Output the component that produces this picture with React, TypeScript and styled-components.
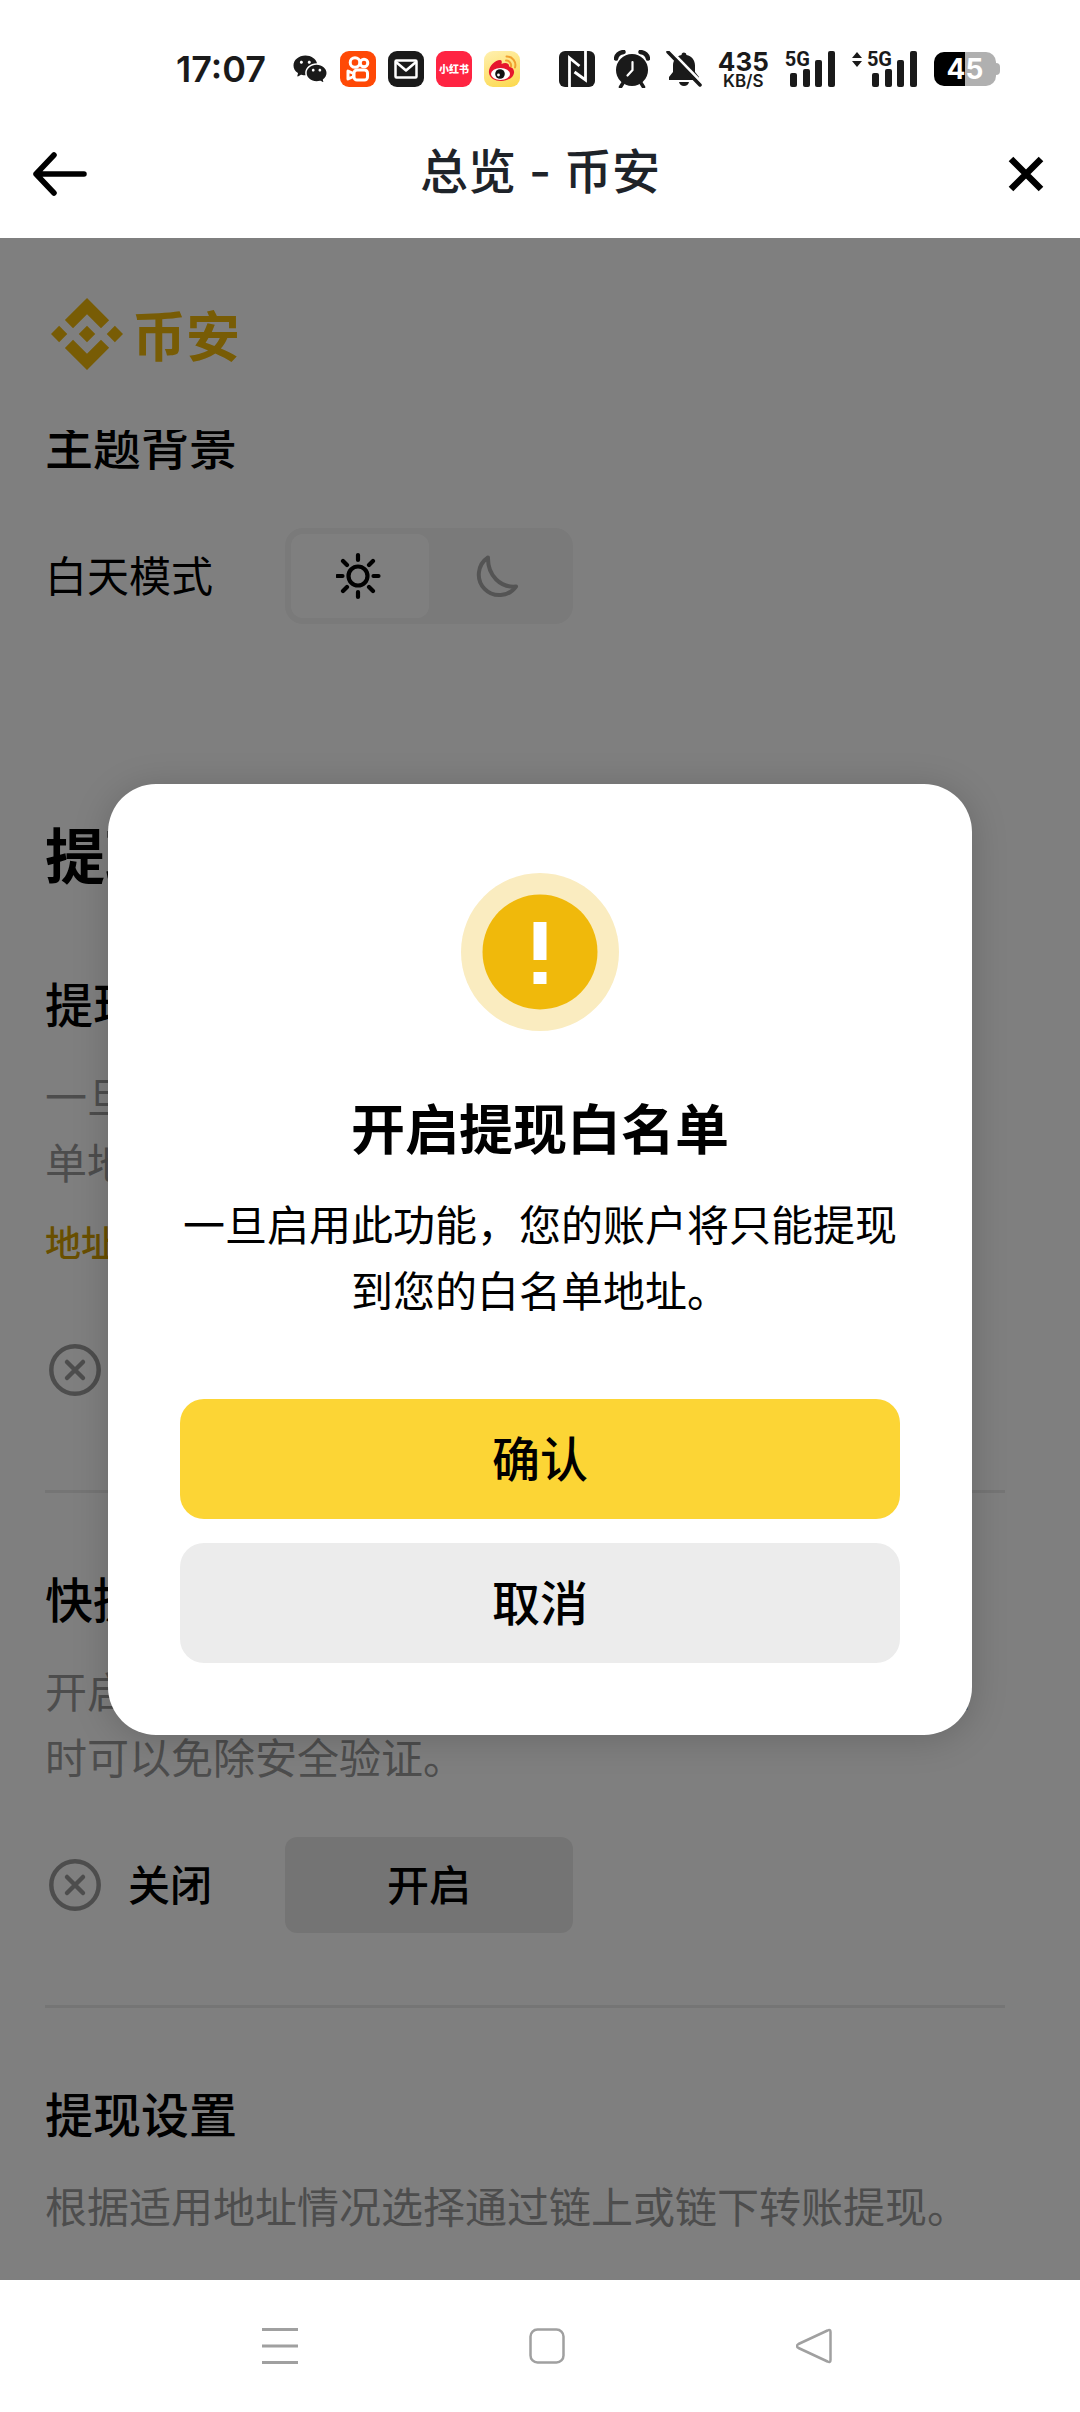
import React, { useState } from "react";
import styled, { createGlobalStyle } from "styled-components";
import { RiWechatFill } from "react-icons/ri";

const GlobalStyle = createGlobalStyle`
  *, *::before, *::after { box-sizing: border-box; }
  body { margin: 0; background: #fff; }
  h1, h2, h3, p, fieldset { margin: 0; padding: 0; border: 0; }
  button { border: 0; padding: 0; background: none; font: inherit; color: inherit; cursor: pointer; }
  svg { display: block; }
`;

const Screen = styled.div`
  display: flex;
  flex-direction: column;
  min-height: 100vh;
  color: #000;
  font-family: "Noto Sans CJK SC", "Noto Sans", sans-serif;
`;

/* ---------- status bar ---------- */

const StatusBar = styled.div`
  display: flex;
  align-items: center;
  justify-content: space-between;
  height: 138px;
  padding: 0 80px 0 176px;
  color: #1a1a1a;
  font-family: Inter, Roboto, sans-serif;
`;

const StatusGroup = styled.div<{ $gap: number }>`
  display: flex;
  align-items: center;
  gap: ${(p) => p.$gap}px;
`;

const Clock = styled.span`
  margin-right: 14px;
  font-size: 36px;
  line-height: 36px;
  font-weight: 600;
`;

const AppTile = styled.span<{ $bg: string }>`
  display: flex;
  align-items: center;
  justify-content: center;
  width: 36px;
  height: 36px;
  border-radius: 9px;
  background: ${(p) => p.$bg};
  color: #fff;
  font-family: "Noto Sans CJK SC", sans-serif;
  font-size: 10px;
  line-height: 36px;
  font-weight: 900;
  white-space: nowrap;
`;

const Speed = styled.span`
  display: flex;
  flex-direction: column;
  align-items: center;
  font-size: 17px;
  line-height: 14px;
  font-weight: 600;

  strong {
    font-size: 26px;
    line-height: 24px;
    font-weight: 700;
  }
`;

const Signal = styled.span`
  display: flex;
  align-items: flex-start;
  height: 36px;
  font-family: Roboto, sans-serif;
  font-size: 20px;
  line-height: 16px;
  font-weight: 700;
`;

const Bars = styled.svg`
  margin-left: -20px;
`;

const Battery = styled.span`
  display: flex;
  align-items: center;
`;

const BatteryBody = styled.span`
  width: 62px;
  height: 34px;
  border-radius: 10px;
  background: linear-gradient(90deg, #000 50%, #b0b0b0 50%);
  color: #fff;
  font-size: 28px;
  line-height: 34px;
  font-weight: 700;
  text-align: center;
`;

const BatteryTip = styled.span`
  width: 4px;
  height: 12px;
  border-radius: 0 4px 4px 0;
  background: #b0b0b0;
`;

/* ---------- title bar ---------- */

const TitleBar = styled.header`
  display: grid;
  grid-template-columns: 72px 1fr 72px;
  align-items: center;
  height: 100px;
  padding: 0 18px 28px;
`;

const TitleText = styled.h1`
  padding-bottom: 4px;
  color: #1e2329;
  font-family: Inter, "Noto Sans CJK SC", sans-serif;
  font-size: 48px;
  line-height: 68px;
  font-weight: 500;
  text-align: center;
`;

const BarButton = styled.button<{ $lead?: boolean }>`
  display: flex;
  align-items: center;
  justify-content: center;
  height: 72px;
  padding-left: ${(p) => (p.$lead ? 12 : 0)}px;
`;

/* ---------- page ---------- */

const Viewport = styled.main`
  position: relative;
  flex: 1;
  overflow: hidden;
`;

const SiteHeader = styled.div`
  display: flex;
  align-items: center;
  height: 192px;
  padding: 0 51px;
`;

const Brand = styled.a`
  display: flex;
  align-items: center;
  gap: 9px;
  color: #f0b90b;
  font-size: 54px;
  line-height: 72px;
  font-weight: 700;
  text-decoration: none;
`;

const Scroller = styled.div`
  overflow: hidden;
  padding: 0 75px 36px 45px;
`;

const Theme = styled.section`
  margin-top: -22px;
`;

const Heading = styled.h2`
  margin-top: 184px;
  font-size: 60px;
  line-height: 90px;
  font-weight: 700;
`;

const Section = styled.section`
  padding: 68px 0 72px;

  & + & {
    border-top: 3px solid #ebebeb;
  }

  &:last-child {
    padding-bottom: 0;
  }
`;

const SubHeading = styled.h3`
  font-size: 48px;
  line-height: 72px;
  font-weight: 500;
`;

const Description = styled.p`
  margin-top: 24px;
  color: #9b9b9b;
  font-size: 42px;
  line-height: 66px;
`;

const GoldLink = styled.a`
  display: block;
  padding: 20px 0 6px;
  color: #d39f00;
  font-size: 36px;
  line-height: 54px;
  font-weight: 500;
  text-decoration: none;
`;

const SettingRow = styled.div`
  display: grid;
  grid-template-columns: 240px 288px;
  align-items: center;
  margin-top: 48px;
  font-size: 42px;
  line-height: 62px;
`;

const RowLabel = styled.span`
  padding-bottom: 4px;
`;

const State = styled.span`
  display: flex;
  align-items: center;
  gap: 27px;
  padding-left: 4px;
  font-weight: 500;
`;

const RowButton = styled.button`
  height: 96px;
  padding-bottom: 4px;
  border-radius: 12px;
  background: #e9e9e9;
  font-weight: 500;
`;

const Segments = styled.fieldset`
  display: grid;
  grid-template-columns: 1fr 1fr;
  min-width: 0;
  height: 96px;
  padding: 6px;
  border-radius: 18px;
  background: #f4f4f4;
`;

const Segment = styled.label<{ $on: boolean }>`
  position: relative;
  display: flex;
  align-items: center;
  justify-content: center;
  border-radius: 12px;
  color: ${(p) => (p.$on ? "#000" : "#a8a8a8")};
  background: ${(p) => (p.$on ? "#fff" : "transparent")};
  cursor: pointer;

  input {
    position: absolute;
    inset: 0;
    margin: 0;
    opacity: 0;
  }
`;

/* ---------- dialog ---------- */

const Overlay = styled.div`
  position: absolute;
  inset: 0;
  display: flex;
  align-items: center;
  justify-content: center;
  background: rgba(0, 0, 0, 0.5);
`;

const Dialog = styled.div`
  display: flex;
  flex-direction: column;
  align-items: center;
  width: 80%;
  padding: 89px 72px 72px;
  border-radius: 48px;
  background: #fff;
  box-shadow: 0 4px 36px rgba(0, 0, 0, 0.18);
  text-align: center;
`;

const DialogTitle = styled.h2`
  margin-top: 54px;
  font-size: 54px;
  line-height: 84px;
  font-weight: 700;
`;

const DialogText = styled.p`
  margin-top: 21px;
  font-size: 42px;
  line-height: 66px;
`;

const DialogActions = styled.div`
  display: grid;
  gap: 24px;
  width: 100%;
  margin-top: 77px;
`;

const ActionButton = styled.button<{ $primary?: boolean }>`
  height: 120px;
  padding-bottom: 6px;
  border-radius: 24px;
  background: ${(p) => (p.$primary ? "#fcd535" : "#ececec")};
  font-size: 48px;
  line-height: 72px;
  font-weight: 500;
`;

/* ---------- system navigation ---------- */

const NavBar = styled.nav`
  display: grid;
  grid-template-columns: repeat(3, 1fr);
  height: 132px;
  padding: 0 133px 0 146px;
  background: #fff;
`;

const NavButton = styled.button`
  display: flex;
  align-items: center;
  justify-content: center;
`;

/* ---------- drawings ---------- */

const CrossCircle = () => (
  <svg width="52" height="52" viewBox="0 0 52 52" fill="none" stroke="#9b9b9b" strokeWidth="4.5" strokeLinecap="round">
    <circle cx="26" cy="26" r="23.7" />
    <path d="M18 18l16 16M34 18L18 34" />
  </svg>
);

const SunIcon = () => (
  <svg width="48" height="54" viewBox="0 0 48 54" fill="none" stroke="currentColor" strokeWidth="4.2" strokeLinecap="round">
    <circle cx="22" cy="27" r="9.5" />
    <path d="M22 6v5M22 43v5M1.500 27h5M37.500 27h5M7 12l4 4M33 38l4 4M7 42l4-4M33 16l4-4" />
  </svg>
);

const MoonIcon = () => (
  <svg width="48" height="48" viewBox="0 0 48 48" fill="none" stroke="currentColor" strokeWidth="4" strokeLinejoin="round">
    <path d="M14 5.500A20.500 20.500 0 1 0 42 34.500C27 36 13.500 24 14 5.500z" />
  </svg>
);

const BrandMark = () => (
  <svg width="72" height="72" viewBox="0 0 126.610 126.610" fill="currentColor" aria-hidden="true">
    <path d="M38.730 53.200l24.590-24.580 24.600 24.600 14.300-14.310L63.320 0l-38.900 38.900z" />
    <path d="M0 63.310L14.300 49l14.310 14.310L14.300 77.610z" />
    <path d="M38.730 73.410l24.590 24.590 24.600-24.600 14.310 14.290-38.910 38.920-38.900-38.900z" />
    <path d="M98 63.310L112.300 49l14.310 14.300-14.310 14.310z" />
    <path d="M77.830 63.300L63.320 48.780 48.780 63.300l14.540 14.530z" />
  </svg>
);

const SignalBars = () => (
  <Bars width="46" height="36" viewBox="0 0 46 36" fill="currentColor">
    <rect x="0" y="22" width="7" height="14" rx="2" />
    <rect x="13" y="18" width="7" height="18" rx="2" />
    <rect x="25" y="9" width="7" height="27" rx="2" />
    <rect x="38" y="0" width="7" height="36" rx="2" />
  </Bars>
);

const StateRow = () => (
  <SettingRow>
    <State>
      <CrossCircle />
      <RowLabel>关闭</RowLabel>
    </State>
    <RowButton type="button">开启</RowButton>
  </SettingRow>
);

export default function App() {
  const [theme, setTheme] = useState("day");
  const [open, setOpen] = useState(true);
  const close = () => setOpen(false);

  return (
    <Screen>
      <GlobalStyle />
      <StatusBar>
        <StatusGroup $gap={12}>
          <Clock>17:07</Clock>
          <RiWechatFill size={36} />
          <AppTile $bg="#ff4906">
            <svg width="26" height="26" viewBox="0 0 26 26" fill="none" stroke="#fff" strokeWidth="3" strokeLinejoin="round">
              <circle cx="10" cy="6.500" r="4.800" />
              <circle cx="19" cy="7" r="3.800" />
              <rect x="9" y="14" width="13.500" height="10" rx="3" />
              <path d="M8.500 17.500L3 15v8l5.500-2.500z" />
            </svg>
          </AppTile>
          <AppTile $bg="#1a1a1a">
            <svg width="24" height="20" viewBox="0 0 24 20" fill="none" stroke="#fff" strokeWidth="2.500" strokeLinejoin="round">
              <rect x="1.500" y="1.500" width="21" height="17" rx="1" />
              <path d="M2 3l10 8.500L22 3" />
            </svg>
          </AppTile>
          <AppTile $bg="#ff2442">小红书</AppTile>
          <AppTile $bg="linear-gradient(160deg, #fff0b0, #fcd84a)">
            <svg width="30" height="30" viewBox="0 0 30 30">
              <path d="M2 19C1 13 8 6 13 6c2 0 2 2 1.500 4 3-1.500 8-1.500 7.500 2.500 3 1 5.500 2.500 5 6.500-.5 5-7 8-13 8S2.500 24 2 19z" fill="#e6162d" />
              <ellipse cx="13.500" cy="20" rx="9.500" ry="6" fill="#fff" />
              <circle cx="13" cy="20" r="4.800" fill="#111" />
              <circle cx="11.500" cy="21" r="1.400" fill="#fff" />
              <path d="M19 6.500a5 5 0 0 1 5 6M19.500 2.500a8.500 8.500 0 0 1 8.500 11" fill="none" stroke="#f0a030" strokeWidth="2" strokeLinecap="round" />
            </svg>
          </AppTile>
        </StatusGroup>
        <StatusGroup $gap={16}>
          <svg width="39" height="36" viewBox="0 0 39 36">
            <rect width="36" height="36" rx="6" fill="#1a1a1a" />
            <path d="M10.500 36V7l10 8M26.500 0v29l-11-8" fill="none" stroke="#fff" strokeWidth="2.800" />
          </svg>
          <svg width="36" height="38" viewBox="0 0 36 38">
            <circle cx="18" cy="20" r="16" fill="#1a1a1a" />
            <path d="M2 8.500Q3 3 9.500 2M34 8.500Q33 3 26.500 2" stroke="#1a1a1a" strokeWidth="4.500" strokeLinecap="round" fill="none" />
            <path d="M9 33l-2.500 4M27 33l2.500 4" stroke="#1a1a1a" strokeWidth="3.500" strokeLinecap="round" />
            <path d="M18.500 12v8l-5 5.500" stroke="#fff" strokeWidth="2.200" fill="none" strokeLinecap="round" />
          </svg>
          <svg width="36" height="36" viewBox="0 0 36 36">
            <path d="M15.500 4a2.500 2.500 0 0 1 5 0c5 1 8.500 5 8.500 10.500V21l4 5v3H3v-3l4-5v-6.500C7 9 10.500 5 15.500 4z" fill="#1a1a1a" />
            <path d="M13 31h10q-1 4-5 4t-5-4z" fill="#1a1a1a" />
            <path d="M4-1l33 34" stroke="#fff" strokeWidth="3" />
            <path d="M2 1l32 33" stroke="#1a1a1a" strokeWidth="3.500" strokeLinecap="round" />
          </svg>
          <Speed>
            <strong>435</strong>KB/S
          </Speed>
          <Signal>
            5G
            <SignalBars />
          </Signal>
          <Signal>
            <svg width="15" height="17" viewBox="0 0 15 17" fill="currentColor">
              <path d="M0 7l5-6 5 6zM0 10h10l-5 6z" />
            </svg>
            5G
            <SignalBars />
          </Signal>
          <Battery>
            <BatteryBody>45</BatteryBody>
            <BatteryTip />
          </Battery>
        </StatusGroup>
      </StatusBar>

      <TitleBar>
        <BarButton type="button" aria-label="返回" $lead>
          <svg width="56" height="44" viewBox="0 0 56 44" fill="none" stroke="#000" strokeWidth="5.500" strokeLinecap="round" strokeLinejoin="round">
            <path d="M22 3L4 22l18 19M4 22h48" />
          </svg>
        </BarButton>
        <TitleText>总览 - 币安</TitleText>
        <BarButton type="button" aria-label="关闭">
          <svg width="36" height="36" viewBox="0 0 36 36" fill="none" stroke="#000" strokeWidth="6.500">
            <path d="M3 3l30 30M33 3L3 33" />
          </svg>
        </BarButton>
      </TitleBar>

      <Viewport>
        <SiteHeader>
          <Brand href="#">
            <BrandMark />
            币安
          </Brand>
        </SiteHeader>
        <Scroller>
          <Theme>
            <SubHeading>主题背景</SubHeading>
            <SettingRow>
              <RowLabel>白天模式</RowLabel>
              <Segments>
                <Segment $on={theme === "day"}>
                  <input type="radio" name="theme" aria-label="白天模式" checked={theme === "day"} onChange={() => setTheme("day")} />
                  <SunIcon />
                </Segment>
                <Segment $on={theme === "night"}>
                  <input type="radio" name="theme" aria-label="夜间模式" checked={theme === "night"} onChange={() => setTheme("night")} />
                  <MoonIcon />
                </Segment>
              </Segments>
            </SettingRow>
          </Theme>
          <Heading>提现</Heading>
          <Section>
            <SubHeading>提现白名单</SubHeading>
            <Description>一旦启用此功能，您的账户将只能提现到您的白名单地址。</Description>
            <GoldLink href="#">地址管理</GoldLink>
            <StateRow />
          </Section>
          <Section>
            <SubHeading>快捷提现</SubHeading>
            <Description>开启此功能后，您在进行小额提现至白名单的地址时可以免除安全验证。</Description>
            <StateRow />
          </Section>
          <Section>
            <SubHeading>提现设置</SubHeading>
            <Description>根据适用地址情况选择通过链上或链下转账提现。</Description>
          </Section>
        </Scroller>
        {open && (
          <Overlay>
            <Dialog role="dialog" aria-modal="true" aria-labelledby="dialog-title">
              <svg width="158" height="158" viewBox="0 0 158 158" aria-hidden="true">
                <circle cx="79" cy="79" r="79" fill="#faecc0" />
                <circle cx="79" cy="79" r="57.500" fill="#f0b90b" />
                <path d="M72.500 49h13v38h-13zM72.500 99h13v12h-13z" fill="#fff" />
              </svg>
              <DialogTitle id="dialog-title">开启提现白名单</DialogTitle>
              <DialogText>一旦启用此功能，您的账户将只能提现到您的白名单地址。</DialogText>
              <DialogActions>
                <ActionButton type="button" $primary onClick={close}>
                  确认
                </ActionButton>
                <ActionButton type="button" onClick={close}>
                  取消
                </ActionButton>
              </DialogActions>
            </Dialog>
          </Overlay>
        )}
      </Viewport>

      <NavBar>
        <NavButton type="button" aria-label="最近任务">
          <svg width="36" height="36" viewBox="0 0 36 36" stroke="#a0a0a0" strokeWidth="3">
            <path d="M0 1.500h36M0 18h36M0 34.500h36" />
          </svg>
        </NavButton>
        <NavButton type="button" aria-label="主屏幕">
          <svg width="36" height="36" viewBox="0 0 36 36" fill="none" stroke="#a0a0a0" strokeWidth="2.500">
            <rect x="1.500" y="1.500" width="33" height="33" rx="7" />
          </svg>
        </NavButton>
        <NavButton type="button" aria-label="返回">
          <svg width="36" height="36" viewBox="0 0 36 36" fill="none" stroke="#a0a0a0" strokeWidth="2.500" strokeLinejoin="round">
            <path d="M31.500 2.500Q34.500 1 34.500 4v28q0 3-3 1.500L2.500 20q-3-2 0-4z" />
          </svg>
        </NavButton>
      </NavBar>
    </Screen>
  );
}
